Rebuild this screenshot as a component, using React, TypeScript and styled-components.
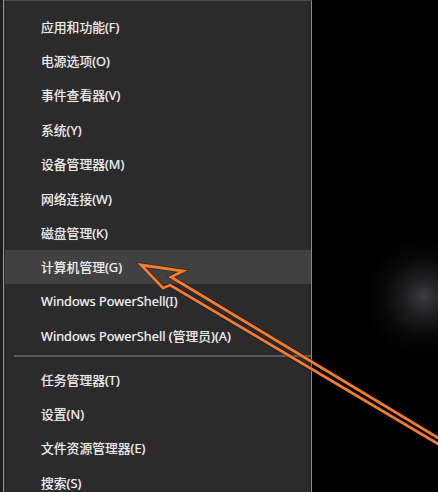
import React from "react";
import styled, { createGlobalStyle } from "styled-components";

const Global = createGlobalStyle`
  html, body { margin: 0; padding: 0; background: #000; }
  body { width: 438px; height: 492px; overflow: hidden; }
  #root { width: 438px; height: 492px; }
`;

const Screen = styled.div`
  position: relative;
  width: 438px;
  height: 492px;
  display: flex;
  background: #000;
  overflow: hidden;
  font-family: "Noto Sans", "Noto Sans CJK SC", sans-serif;
`;

const LeftStrip = styled.div`
  width: 3px;
  background: #1e1e1e;
  border-right: 1px solid #9a9a9a;
`;

const Menu = styled.div`
  width: 307px;
  background: #2b2b2b;
  border-top: 1px solid #4a4a4a;
  border-right: 1px solid #8c8c8c;
  box-shadow: inset -2px 0 0 #262626;
  padding-top: 8px;
  display: flex;
  flex-direction: column;
`;

const Item = styled.div<{ $active?: boolean }>`
  height: 34.4px;
  flex: none;
  display: flex;
  align-items: center;
  padding-left: 36px;
  margin-left: 1px;
  background: ${(p) => (p.$active ? "#414141" : "transparent")};
  color: #ededed;
  font-size: 12.8px;
  white-space: nowrap;
  text-shadow: 0 0 0.8px rgba(255, 255, 255, 0.6);
`;

const Separator = styled.div`
  flex: none;
  height: 9px;
  display: flex;
  align-items: center;
  padding: 0 0 0 10px;
  &::before {
    content: "";
    flex: 1;
    height: 1px;
    background: #8a8a8a;
    transform: translateY(-1.5px);
  }
`;

const Desktop = styled.div`
  flex: 1;
  background: radial-gradient(circle at 112px 297px, #3c3c3e 0px, #202022 18px, #080808 40px, #000 60px);
`;

const ArrowLayer = styled.svg`
  position: absolute;
  left: 0;
  top: 0;
  pointer-events: none;
`;

const top = [
  "应用和功能(F)",
  "电源选项(O)",
  "事件查看器(V)",
  "系统(Y)",
  "设备管理器(M)",
  "网络连接(W)",
  "磁盘管理(K)",
  "计算机管理(G)",
  "Windows PowerShell(I)",
  "Windows PowerShell (管理员)(A)",
];
const bottom = ["任务管理器(T)", "设置(N)", "文件资源管理器(E)", "搜索(S)"];

const arrowPoints = "141,265 183,271 171,277 450,445 450,451 170,285 163,288";

export default function App() {
  return (
    <Screen>
      <Global />
      <LeftStrip />
      <Menu>
        {top.map((t, i) => (
          <Item key={t} $active={i === 7}>
            {t}
          </Item>
        ))}
        <Separator />
        {bottom.map((t) => (
          <Item key={t}>{t}</Item>
        ))}
      </Menu>
      <Desktop />
      <ArrowLayer width="438" height="492" viewBox="0 0 438 492">
        <polygon
          points={arrowPoints}
          fill="none"
          stroke="#1a0d04"
          strokeOpacity="0.5"
          strokeWidth="4.4"
          strokeLinejoin="miter"
        />
        <polygon
          points={arrowPoints}
          fill="none"
          stroke="#f07c2c"
          strokeWidth="2.8"
          strokeLinejoin="miter"
        />
      </ArrowLayer>
    </Screen>
  );
}
